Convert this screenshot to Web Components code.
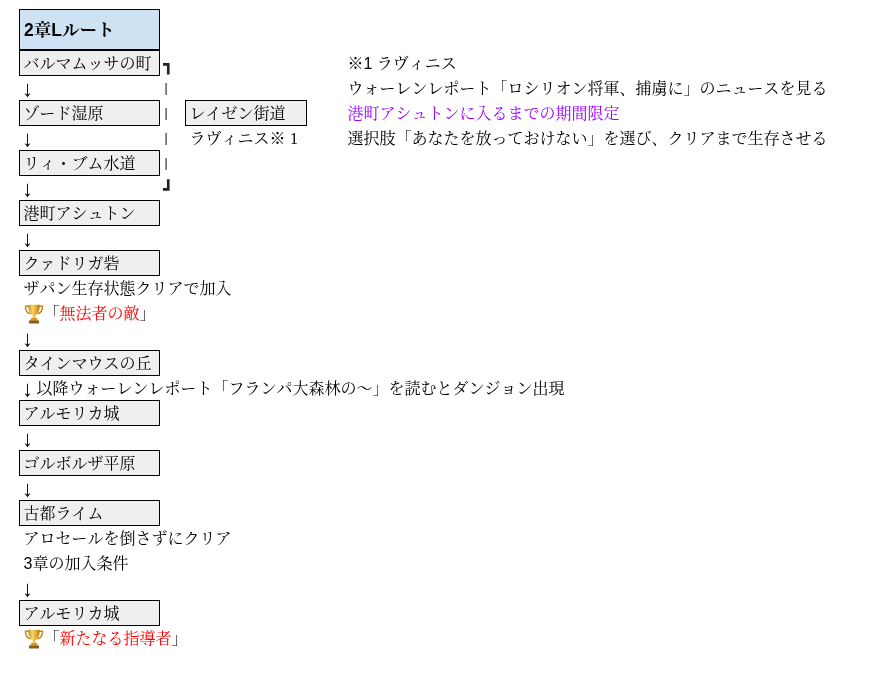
<!DOCTYPE html>
<html lang="ja">
<head>
<meta charset="utf-8">
<title>2章Lルート</title>
<style>
    body{
        margin: 0;
        background: #fff;
        color: #000;
        font: 16px "Liberation Sans", "Noto Serif CJK JP", "Noto Sans CJK JP", sans-serif;
        font-kerning: none;
    }
</style>
</head>
<body>

<route-sheet>
    <sheet-cell kind="head" at="1/1">2章Lルート</sheet-cell>
    <sheet-cell kind="box" at="2/1">バルマムッサの町</sheet-cell>
    <sheet-cell at="3/1"><down-arrow></down-arrow></sheet-cell>
    <sheet-cell kind="box" at="4/1">ゾード湿原</sheet-cell>
    <sheet-cell at="5/1"><down-arrow></down-arrow></sheet-cell>
    <sheet-cell kind="box" at="6/1">リィ・ブム水道</sheet-cell>
    <sheet-cell at="7/1"><down-arrow></down-arrow></sheet-cell>
    <sheet-cell kind="box" at="8/1">港町アシュトン</sheet-cell>
    <sheet-cell at="9/1"><down-arrow></down-arrow></sheet-cell>
    <sheet-cell kind="box" at="10/1">クァドリガ砦</sheet-cell>
    <sheet-cell at="11/1">ザパン生存状態クリアで加入</sheet-cell>
    <sheet-cell at="12/1"><trophy-icon></trophy-icon>「<red-text>無法者の敵</red-text>」</sheet-cell>
    <sheet-cell at="13/1"><down-arrow></down-arrow></sheet-cell>
    <sheet-cell kind="box" at="14/1">タインマウスの丘</sheet-cell>
    <sheet-cell at="15/1"><down-arrow></down-arrow> 以降ウォーレンレポート「フランパ大森林の～」を読むとダンジョン出現</sheet-cell>
    <sheet-cell kind="box" at="16/1">アルモリカ城</sheet-cell>
    <sheet-cell at="17/1"><down-arrow></down-arrow></sheet-cell>
    <sheet-cell kind="box" at="18/1">ゴルボルザ平原</sheet-cell>
    <sheet-cell at="19/1"><down-arrow></down-arrow></sheet-cell>
    <sheet-cell kind="box" at="20/1">古都ライム</sheet-cell>
    <sheet-cell at="21/1">アロセールを倒さずにクリア</sheet-cell>
    <sheet-cell at="22/1">3章の加入条件</sheet-cell>
    <sheet-cell at="23/1"><down-arrow></down-arrow></sheet-cell>
    <sheet-cell kind="box" at="24/1">アルモリカ城</sheet-cell>
    <sheet-cell at="25/1"><trophy-icon></trophy-icon>「<red-text>新たなる指導者</red-text>」</sheet-cell>

    <sheet-cell kind="corner" at="2/2">┓</sheet-cell>
    <sheet-cell kind="bar" at="3/2">|</sheet-cell>
    <sheet-cell kind="bar" at="4/2">|</sheet-cell>
    <sheet-cell kind="bar" at="5/2">|</sheet-cell>
    <sheet-cell kind="bar" at="6/2">|</sheet-cell>
    <sheet-cell kind="corner" at="7/2">┛</sheet-cell>

    <sheet-cell kind="box" at="4/3">レイゼン街道</sheet-cell>
    <sheet-cell at="5/3">ラヴィニス※ <span style="font-family:'Liberation Serif',serif">1</span></sheet-cell>

    <sheet-cell at="2/5">※1 ラヴィニス</sheet-cell>
    <sheet-cell at="3/5">ウォーレンレポート「ロシリオン将軍、捕虜に」のニュースを見る</sheet-cell>
    <sheet-cell at="4/5" style="color:#9900ff">港町アシュトンに入るまでの期間限定</sheet-cell>
    <sheet-cell at="5/5">選択肢「あなたを放っておけない」を選び、クリアまで生存させる</sheet-cell>
</route-sheet>

<script>
class RouteSheet extends HTMLElement {
    constructor(){
        super();
        this.attachShadow({mode: 'open'}).innerHTML = `
            <style>
                :host{
                    display: grid;
                    grid-template-columns: 141px 25px 122px 36px 1fr;
                    grid-template-rows: 41px repeat(24, 25px);
                    padding: 9px 0 0 19px;
                    will-change: transform;
                }
            </style>
            <slot></slot>
        `;
    }
}

class SheetCell extends HTMLElement {
    constructor(){
        super();
        this.attachShadow({mode: 'open'}).innerHTML = `
            <style>
                :host{
                    display: flex;
                    align-items: flex-end;
                    box-sizing: border-box;
                    padding: 0 0 2px 4.5px;
                    white-space: nowrap;
                    line-height: 19px;
                    min-width: 0;
                }
                :host([kind='box']),
                :host([kind='head']){
                    border: 1px solid #000;
                    background: #efefef;
                    padding: 0 0 2px 3.5px;
                }
                :host([kind='box']){
                    height: 26px;
                }
                :host([kind='head']){
                    background: #cfe2f3;
                    font-weight: bold;
                    font-size: 17.5px;
                    align-items: center;
                    padding: 2px 0 0 4px;
                }
                :host([kind='corner']){
                    font-family: "DejaVu Sans", sans-serif;
                    font-size: 17px;
                    padding: 0 0 1px 3px;
                    color: #222;
                }
                :host([kind='bar']){
                    font-size: 12px;
                    line-height: 10px;
                    padding: 0 0 7px 4.5px;
                    color: #000;
                }
            </style>
            <div><slot></slot></div>
        `;
    }

    connectedCallback(){
        let at = this.getAttribute("at").split("/");
        this.style.gridRow = at[0];
        this.style.gridColumn = at[1];
    }
}

class DownArrow extends HTMLElement {
    constructor(){
        super();
        this.attachShadow({mode: 'open'}).innerHTML = `<style>
                :host{
                    display: inline-block;
                    width: 8.6px;
                    font-family: "Liberation Sans", sans-serif;
                }
                span{ font-size: 22px; line-height: 0; vertical-align: -2px; margin-left: -1.5px; }
            </style><span>↓</span>`;
    }
}

class RedText extends HTMLElement {
    constructor(){
        super();
        this.attachShadow({mode: 'open'}).innerHTML = `<style>:host{ color: #ff0000; }</style><slot></slot>`;
    }
}

class TrophyIcon extends HTMLElement {
    constructor(){
        super();
        this.attachShadow({mode: 'open'}).innerHTML = `<style>
                :host{ display: inline-block; width: 20px; height: 20px; margin: -4px 0; vertical-align: -1px; }
                svg{ display: block; }
            </style><svg width="20" height="20" viewBox="0 0 20 20">
                <defs>
                    <linearGradient id="gold" x1="0" x2="1" y1="0" y2="0">
                        <stop offset="0" stop-color="#c9861a"/>
                        <stop offset=".35" stop-color="#f7d56a"/>
                        <stop offset=".7" stop-color="#e6a92b"/>
                        <stop offset="1" stop-color="#b5730f"/>
                    </linearGradient>
                </defs>
                <path d="M5 2.200H1.500c-.2 3.800 1.500 6.600 5 7.600M15 2.200h3.500c.2 3.800-1.500 6.600-5 7.600" fill="none" stroke="#c08a1e" stroke-width="1.500"/>
                <path d="M4.300 .8h11.400c.2 5-1.300 9-4.300 10.400v3.300H8.600v-3.300C5.600 9.800 4.100 5.800 4.300 .8z" fill="url(#gold)"/>
                <path d="M7.300 14h5.400l1.300 2.700H6z" fill="#d8981f"/>
                <rect x="5" y="16.500" width="10" height="3" fill="#8a5a1c"/>
            </svg>`;
    }
}

window.customElements.define('route-sheet', RouteSheet);
window.customElements.define('sheet-cell', SheetCell);
window.customElements.define('down-arrow', DownArrow);
window.customElements.define('red-text', RedText);
window.customElements.define('trophy-icon', TrophyIcon);
</script>
</body>
</html>
